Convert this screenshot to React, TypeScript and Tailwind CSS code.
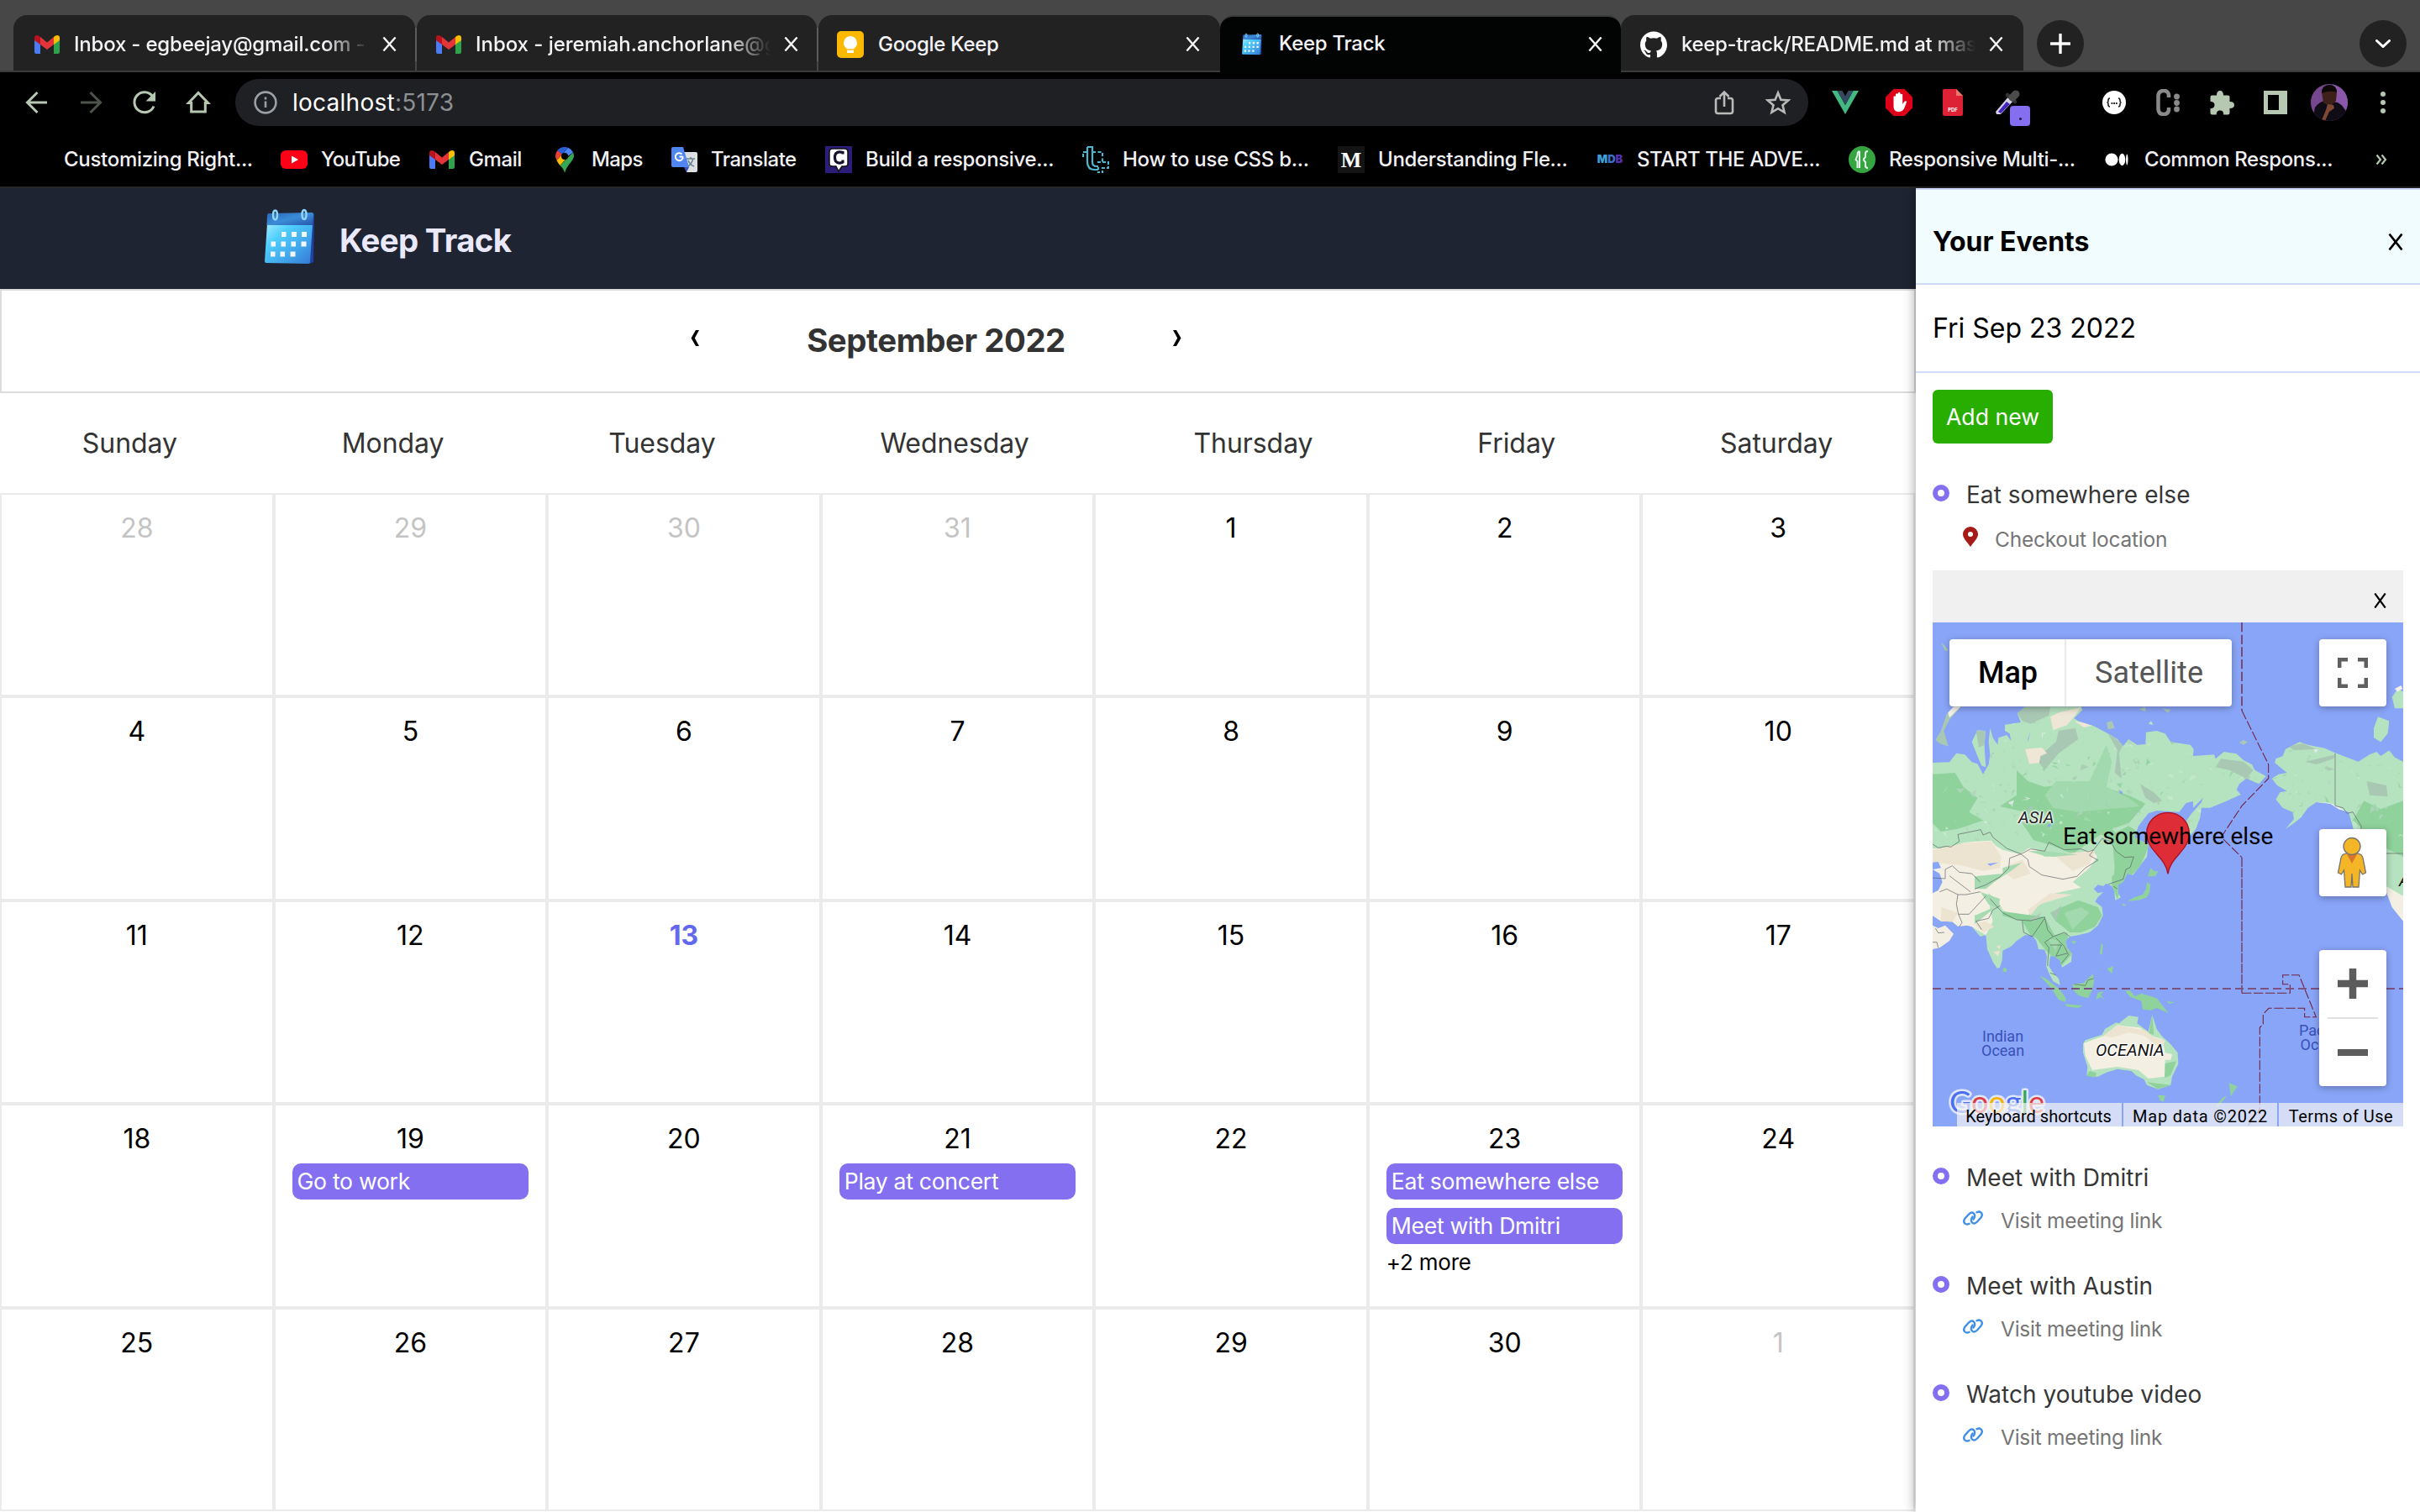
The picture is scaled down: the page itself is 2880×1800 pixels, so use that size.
import React from "react";
import { SiGithub } from "react-icons/si";

const CloseIcon = ({ className }: { className: string }) => (
  <svg viewBox="0 0 18 18" preserveAspectRatio="none" className={className} fill="none" stroke="currentColor" strokeWidth="2.5">
    <path d="M1.500 0.500 16.500 17.500M16.500 0.500 1.500 17.500" />
  </svg>
);

const GmailIcon = () => (
  <svg viewBox="0 0 30 22" className="h-[22px] w-[30px]">
    <path d="M0 3v17q0 2 2 2h5V9z" fill="#4b7bf5" />
    <path d="M30 3v17q0 2-2 2h-5V9z" fill="#2fa24c" />
    <path d="M7 2v9L0 6V3Q0 0 3 0q2 0 4 2z" fill="#b8131f" />
    <path d="M23 2v9l7-5V3q0-3-3-3-2 0-4 2z" fill="#fbbc04" />
    <path d="M7 2l8 6.500 8-6.500v9l-8 6-8-6z" fill="#e3343a" />
  </svg>
);

const CalendarLogo = ({ className }: { className: string }) => (
  <svg viewBox="0 0 60 68" className={className}>
    <defs>
      <linearGradient id="calPage" x1="0" y1="0" x2="1" y2="1">
        <stop offset="0" stopColor="#a6ecff" />
        <stop offset=".3" stopColor="#4fcffc" />
        <stop offset=".65" stopColor="#41a6ec" />
        <stop offset="1" stopColor="#3478d4" />
      </linearGradient>
      <linearGradient id="calTop" x1="0" y1="0" x2="1" y2="1">
        <stop offset="0" stopColor="#2a62b8" />
        <stop offset=".5" stopColor="#3b8cd6" />
        <stop offset="1" stopColor="#2756ac" />
      </linearGradient>
    </defs>
    <path d="M55 6l4 0-1 58-5 2z" fill="#1f42a0" />
    <path d="M3 18h54l-3 46q0 2-2 2L2 65q-2 0-2-2z" fill="url(#calPage)" />
    <path d="M4 6l53-1 1 2-1 13H2.500L3 8z" fill="url(#calTop)" />
    <ellipse cx="12.500" cy="8" rx="2.500" ry="5.500" fill="none" stroke="#8fd6fa" strokeWidth="2.400" />
    <ellipse cx="47" cy="7.500" rx="2.500" ry="5.500" fill="none" stroke="#8fd6fa" strokeWidth="2.400" />
    <g fill="#f3f6fb">
      <path d="M20 28h5.500v6H20zM32 28h6v6h-6zM44 28h6v6h-6z" />
      <path d="M7.500 39.500H13v6H7.500zM19.500 39.500H25v6h-5.500zM31.500 39.500h5.500v6h-5.500zM43.500 39.500h6v6h-6z" />
      <path d="M7 51.500h5.500v6H7zM18.500 51.500H24v6h-5.500zM30.500 51.500h6v6h-6z" />
    </g>
  </svg>
);

const KeepIcon = () => (
  <svg viewBox="0 0 32 32" className="size-8">
    <rect width="32" height="32" rx="5" fill="#fbb904" />
    <path d="M16 6a8 8 0 0 0-4.500 14.500V22h9v-1.500A8 8 0 0 0 16 6z" fill="#fff" />
    <path d="M12 22.500h8V26h-8z" fill="#fff" />
    <path d="M11 21.300h10v1.200H11z" fill="#fbb904" />
  </svg>
);

type TabProps = {
  icon: React.ReactNode;
  label: string;
  width: string;
  pad: string;
  tracking: string;
  active?: boolean;
  fade?: boolean;
};

const Tab = ({ icon, label, width, pad, tracking, active, fade }: TabProps) => (
  <div
    className={`flex items-center rounded-t-[16px] ${width} ${pad} ${
      active ? "border-t-2 border-[#3b3b3b] bg-[#020303] pb-1" : "bg-[#222222] pt-[3px]"
    }`}
  >
    <span className="flex shrink-0">{icon}</span>
    <span
      className={`min-w-0 flex-1 overflow-hidden whitespace-nowrap text-[24px] font-medium text-[#f3f3f6] ${tracking} ${
        active ? "ml-5" : "ml-[17px]"
      } ${fade ? "mask-r-from-85% mask-r-to-100%" : ""}`}
    >
      {label}
    </span>
    <CloseIcon className="ml-4 h-[17px] w-[17px] shrink-0 text-[#f4f4f4]" />
  </div>
);

const bookmarks: { icon: React.ReactNode; label: string; width: string; gap: string; tracking: string }[] = [
  { icon: <span className="w-8" />, label: "Customizing Right...", width: "w-[306px]", gap: "gap-4", tracking: "tracking-[-0.3px]" },
  {
    icon: (
      <svg viewBox="0 0 32 22" className="h-[22px] w-8">
        <rect width="32" height="22" rx="6" fill="#ff0016" />
        <path d="M13 6.500v9l8-4.500z" fill="#fff" />
      </svg>
    ),
    label: "YouTube", width: "w-[177px]", gap: "gap-4", tracking: "tracking-[-0.8px]",
  },
  { icon: <GmailIcon />, label: "Gmail", width: "w-[150px]", gap: "gap-[17px]", tracking: "tracking-[-0.4px]" },
  {
    icon: (
      <svg viewBox="0 0 22 31" className="h-[31px] w-[22px]">
        <path d="M11 0a11 11 0 0 0-8.500 4L7.500 9 15 .8A11 11 0 0 0 11 0z" fill="#2a5fd8" />
        <path d="M15 .8 8 9l4 4 9-6.500A11 11 0 0 0 15 .8z" fill="#4b84f3" />
        <path d="M2.500 4A11 11 0 0 0 1.500 16L8 9z" fill="#e94235" />
        <path d="M1.500 16q1.500 3 4 6L15 11.500 8 9z" fill="#fbbc04" />
        <path d="M21 6.500 5.500 22Q10 26 11 31q1-5 5-10Q22 14 22 11q0-2.500-1-4.500z" fill="#34a853" />
        <circle cx="11" cy="11" r="4" fill="#000" />
      </svg>
    ),
    label: "Maps", width: "w-[138px]", gap: "gap-[21px]", tracking: "tracking-[-0.6px]",
  },
  {
    icon: (
      <svg viewBox="0 0 31 30" className="h-[30px] w-[31px]">
        <path d="M14 6h15q2 0 2 2v20q0 2-2 2H18z" fill="#dde0e2" />
        <path d="M15 24h6l-3 6z" fill="#3b50c0" />
        <path d="M2 0h12l7 24H2q-2 0-2-2V2q0-2 2-2z" fill="#4f86f2" />
        <path d="M13.500 11.500H9.500M12.500 8.500a4.500 4.500 0 1 0 1.300 3" fill="none" stroke="#fff" strokeWidth="2" />
        <path d="M18 14h10M23 12v2M26 14q-2 6-6 9M20 16q2 5 7 7" fill="none" stroke="#6a8290" strokeWidth="1.600" />
      </svg>
    ),
    label: "Translate", width: "w-[183px]", gap: "gap-[16px]", tracking: "tracking-[-0.5px]",
  },
  {
    icon: (
      <svg viewBox="0 0 32 32" className="size-8">
        <rect width="32" height="32" fill="#2c1d78" />
        <path d="M9 3h14q4 0 4 4v14q0 3-4 3h-3l-4 6-3-6H9q-4 0-4-3V7q0-4 4-4z" fill="#fff" stroke="#111" strokeWidth="1.500" />
        <path d="M21 9.500V7.500q-6-2-8.500 1.500-2 4 0 9 3 3.500 8.500 1v-2.500" fill="none" stroke="#17122b" strokeWidth="3.200" />
      </svg>
    ),
    label: "Build a responsive...", width: "w-[306px]", gap: "gap-4", tracking: "tracking-[-0.35px]",
  },
  {
    icon: (
      <svg viewBox="0 0 32 32" className="size-8" fill="none" stroke="#4fb6cf" strokeWidth="2.200">
        <path d="M6 1h6v18q0 5 5 5h2" />
        <path d="M6 1v18q0 9 9 9h4" />
        <path d="M12 7h12v12h-6" strokeDasharray="4 2.500" />
        <path d="M1 13V7h4M24 19h7v7h-6" strokeDasharray="4 2" />
        <path d="M19 25v6h5v-6" strokeDasharray="3 2" />
      </svg>
    ),
    label: "How to use CSS b...", width: "w-[304px]", gap: "gap-4", tracking: "tracking-[-0.25px]",
  },
  {
    icon: (
      <span className="flex size-8 items-center justify-center bg-[#141414] font-['Liberation_Serif',serif] text-[26px] font-bold text-white">M</span>
    ),
    label: "Understanding Fle...", width: "w-[308px]", gap: "gap-4", tracking: "tracking-[-0.35px]",
  },
  {
    icon: (
      <span className="flex w-8 justify-center font-['Inter',sans-serif] text-[13px] font-black">
        <span className="text-[#3f9fd4]">M</span>
        <span className="text-[#3c6fc9]">D</span>
        <span className="text-[#5430b4]">B</span>
      </span>
    ),
    label: "START THE ADVE...", width: "w-[300px]", gap: "gap-4", tracking: "tracking-[-0.4px]",
  },
  {
    icon: (
      <svg viewBox="0 0 32 32" className="size-8">
        <circle cx="16" cy="16" r="16" fill="#35a541" />
        <path d="M13 6v20M13 6q-2.500 0-2.500 5l-2 5 2 2v8M17.500 16l2.500-3V9q0-3 3-3M17.500 16l2.500 3v4q0 3 3 3" fill="none" stroke="#eaf7eb" strokeWidth="2" />
      </svg>
    ),
    label: "Responsive Multi-...", width: "w-[303px]", gap: "gap-4", tracking: "tracking-[-0.35px]",
  },
  {
    icon: (
      <svg viewBox="0 0 32 32" className="size-8" fill="#fff">
        <circle cx="10" cy="16" r="7.600" />
        <ellipse cx="22.500" cy="16" rx="3.800" ry="7.200" />
        <ellipse cx="28.300" cy="16" rx="1.200" ry="6.500" />
      </svg>
    ),
    label: "Common Respons...", width: "w-[324px]", gap: "gap-[17px]", tracking: "tracking-[-0.4px]",
  },
];

const Browser = () => (
  <header className="h-[224px] w-full overflow-hidden border-b-2 border-[#262727] bg-black">
    <div className="flex h-[86px] items-end border-b-2 border-[#3b3b3b] bg-[#474747] pl-4">
      <div className="flex h-[66px]">
        <Tab icon={<GmailIcon />} label="Inbox - egbeejay@gmail.com -" width="w-[478px]" pad="pl-[25px] pr-[22px]" tracking="tracking-[-0.2px]" fade />
        <div className="mt-[15px] h-10 w-0.5 bg-[#5c5c5c]" />
        <Tab icon={<GmailIcon />} label="Inbox - jeremiah.anchorlane@gmail.com" width="w-[476px]" pad="pl-[23px] pr-[22px]" tracking="tracking-[-0.05px]" fade />
        <div className="mt-[15px] h-10 w-0.5 bg-[#5c5c5c]" />
        <Tab icon={<KeepIcon />} label="Google Keep" width="w-[478px]" pad="pl-[22px] pr-[24px]" tracking="tracking-[-0.3px]" />
        <div className="-mb-1 flex">
          <Tab icon={<CalendarLogo className="h-[27px] w-6" />} label="Keep Track" width="w-[477px]" pad="pl-[26px] pr-[22px]" tracking="tracking-[-0.3px]" active />
        </div>
        <Tab icon={<SiGithub className="size-8 text-white" />} label="keep-track/README.md at master" width="w-[479px]" pad="pl-[23px] pr-[24px]" tracking="tracking-[-0.35px]" fade />
      </div>
      <div className="mb-1 ml-4 flex size-14 items-center justify-center rounded-full bg-[#222]">
        <svg viewBox="0 0 24 24" className="size-6" stroke="#fff" strokeWidth="3.400" strokeLinecap="round">
          <path d="M12 1v22M1 12h22" />
        </svg>
      </div>
      <div className="mr-4 mb-1 ml-auto flex size-14 items-center justify-center rounded-full bg-[#222]">
        <svg viewBox="0 0 18 10" className="h-2.5 w-[18px]" fill="none" stroke="#fff" strokeWidth="3" strokeLinecap="round">
          <path d="M1.500 1.500 9 8.500l7.500-7" />
        </svg>
      </div>
    </div>

    <div className="flex h-[72px] items-center pl-7">
      <div className="flex w-[252px] items-center gap-8 text-[#b6c8b1]">
        <svg viewBox="0 0 32 32" className="size-8" fill="none" stroke="currentColor" strokeWidth="3">
          <path d="M28 16H5M16.500 4 4.500 16l12 12" />
        </svg>
        <svg viewBox="0 0 32 32" className="size-8" fill="none" stroke="#4c544b" strokeWidth="3">
          <path d="M4 16h23M15.500 4l12 12-12 12" />
        </svg>
        <svg viewBox="0 0 32 32" className="size-8" fill="none" stroke="currentColor" strokeWidth="3">
          <path d="M27 20.500A12 12 0 1 1 25.500 8.500" />
          <path d="M29 3v11.500H17.500z" fill="currentColor" stroke="none" />
        </svg>
        <svg viewBox="0 0 32 32" className="size-8" fill="none" stroke="currentColor" strokeWidth="3">
          <path d="M4.500 16.500 16 4.500l11.500 12h-3.200V27H7.700V16.500z" />
        </svg>
      </div>
      <div className="flex h-14 w-[1872px] items-center rounded-full bg-[#1f2023] pl-[22px]">
        <svg viewBox="0 0 28 28" className="size-7" fill="none" stroke="#9aa0a6" strokeWidth="2.600">
          <circle cx="14" cy="14" r="12.400" />
          <path d="M14 12.500V20M14 7.500v3" />
        </svg>
        <span className="ml-[18px] text-[28px] tracking-[0.25px] text-white">
          localhost<span className="text-[#8d8f93]">:5173</span>
        </span>
        <svg viewBox="0 0 24 30" className="mr-[37px] ml-auto h-[30px] w-6" fill="none" stroke="#b9bbb9" strokeWidth="2.600">
          <path d="M8 10H4.500Q2 10 2 12.500v13Q2 28 4.500 28h15q2.500 0 2.500-2.500v-13Q22 10 19.500 10H16M12 20V2.500M6.500 8 12 2.500 17.500 8" />
        </svg>
        <svg viewBox="0 0 30 30" className="mr-[21px] size-[30px]" fill="none" stroke="#b9bbb9" strokeWidth="2.600">
          <path d="M15 3.500l3.400 8.200 8.800.7-6.700 5.800 2.100 8.600-7.600-4.600-7.600 4.600 2.100-8.600-6.700-5.800 8.800-.7z" />
        </svg>
      </div>
      <div className="ml-7 flex flex-1 items-center">
        <svg viewBox="0 0 32 28" className="mr-8 h-7 w-8">
          <path d="M0 0h6.500L16 17 25.500 0H32L16 28z" fill="#42b883" />
          <path d="M6.500 0h6L16 6.500 19.500 0h6L16 17z" fill="#35495e" />
        </svg>
        <svg viewBox="0 0 32 32" className="mr-9 size-8">
          <path d="M9.500 0h13L32 9.500v13L22.500 32h-13L0 22.500v-13z" fill="#dd0018" />
          <path d="M9.500 15.500V9q1.500-1.500 2.500 0V6q1.500-1.700 2.700 0V4.500q1.500-1.500 2.800 0V6.500q1.500-1.500 2.700 0V18l2-3q2-1.500 3 0l-3 8q-2 4-6.500 4-6 0-6.200-6z" fill="#fff" />
        </svg>
        <svg viewBox="0 0 24 32" className="mr-[38px] h-8 w-6">
          <path d="M2 0h14l8 8v22q0 2-2 2H2q-2 0-2-2V2q0-2 2-2z" fill="#dd2235" />
          <path d="M16 0l8 8h-8z" fill="#e9776a" />
          <text x="12" y="27" textAnchor="middle" fontSize="5.800" fontWeight="700" fill="#fff" fontFamily="Inter, sans-serif">PDF</text>
        </svg>
        <div className="relative mr-[86px] size-8">
          <svg viewBox="0 0 32 32" className="size-8">
            <path d="M1 27 18 7l6 5L7 30H2z" fill="#d4d0e6" />
            <path d="M4 27 14 15l4 3L7 29z" fill="#4322c0" />
            <path d="M15 7l9 8" stroke="#333" strokeWidth="4.500" strokeLinecap="round" />
            <path d="M21 10l4-4" stroke="#4b4b4b" strokeWidth="9" strokeLinecap="round" />
          </svg>
          <span className="absolute top-[20px] left-[18px] flex size-6 items-center justify-center rounded-[4px] bg-[#856ff0]">
            <span className="mt-1.5 size-[3px] rounded-full bg-[#1c1538]" />
          </span>
        </div>
        <svg viewBox="0 0 28 28" className="mr-9 ml-[10px] size-7">
          <circle cx="14" cy="14" r="14" fill="#fff" />
          <path d="M9 9q-2 0-2 2.500Q7 14 5.500 14 7 14 7 16.500T9 19M19 9q2 0 2 2.500 0 2.500 1.500 2.500Q21 14 21 16.500T19 19" fill="none" stroke="#222" strokeWidth="1.600" />
          <path d="M10.500 15h1.800M13.200 15h1.800M15.900 15h1.800" stroke="#222" strokeWidth="2" />
        </svg>
        <svg viewBox="0 0 28 32" className="mr-9 h-8 w-7">
          <path d="M15 10V7q-1-5-6-5-6 0-6.500 6v16q.5 6 6.500 6 5 0 6-5v-3" fill="none" stroke="#8a8a8a" strokeWidth="4.500" />
          <g fill="#8a8a8a">
            <circle cx="24.500" cy="9" r="3.400" />
            <circle cx="24.500" cy="16.500" r="3.400" />
            <circle cx="24.500" cy="24" r="3.400" />
          </g>
        </svg>
        <svg viewBox="0 0 29 29" className="mr-[35px] size-[29px]">
          <path d="M2.500 5.500H8q0-5.500 4-5.500t4 5.500h5.500q2 0 2 2V13Q29 13 29 17t-5.500 4v5.500q0 2-2 2h-5.200q0-5-4.300-5t-4.300 5H2.500q-2 0-2-2v-5.200q5-.3 5-4.300t-5-4.300V7.500q0-2 2-2z" fill="#b6c8b1" />
        </svg>
        <svg viewBox="0 0 28 28" className="mr-7 size-7">
          <path d="M0 0h28v28H0zM5 5v18h13V5z" fill="#b6c8b1" fillRule="evenodd" />
        </svg>
        <svg viewBox="0 0 44 44" className="mr-[38px] size-11">
          <clipPath id="avatarClip">
            <circle cx="22" cy="22" r="22" />
          </clipPath>
          <g clipPath="url(#avatarClip)">
            <path d="M0 0h44v44H0z" fill="#75478f" />
            <path d="M26 0h18v30H26z" fill="#8a58a8" />
            <path d="M5 28q6-8 13-8l14 2q8 4 12 16v6H2z" fill="#100c16" />
            <path d="M13 10q0-8 9-8t9 8l-1 10-7 7-8-5z" fill="#3c2019" />
            <path d="M13 11q0-10 9-10t9 9q-9-3-18 1z" fill="#0b0707" />
            <path d="M20 24l7 1 1 4-6 4-5 11-4-1 5-12z" fill="#7d4734" />
          </g>
        </svg>
        <svg viewBox="0 0 8 28" className="h-7 w-2" fill="#b6c8b1">
          <circle cx="4" cy="4" r="3" />
          <circle cx="4" cy="14" r="3" />
          <circle cx="4" cy="24" r="3" />
        </svg>
      </div>
    </div>

    <div className="flex h-16 items-center pl-[28px]">
      {bookmarks.map((b) => (
        <div key={b.label} className={`flex h-9 shrink-0 items-center ${b.width} ${b.gap}`}>
          <span className="flex justify-center">{b.icon}</span>
          <span className={`text-[24px] font-medium whitespace-nowrap text-[#f1f1f4] ${b.tracking}`}>{b.label}</span>
        </div>
      ))}
      <svg viewBox="0 0 14 14" className="size-3.5" fill="none" stroke="#b6c8b1" strokeWidth="2.200">
        <path d="M1.500 1.500 6 7l-4.500 5.500M7.500 1.500 12 7l-4.500 5.500" />
      </svg>
    </div>
  </header>
);

type Day = { n: number; out?: boolean; today?: boolean; events?: string[]; more?: string };

const days: Day[] = [
  ...[28, 29, 30, 31].map((n) => ({ n, out: true })),
  ...Array.from({ length: 30 }, (_, i): Day => {
    const n = i + 1;
    if (n === 13) return { n, today: true };
    if (n === 19) return { n, events: ["Go to work"] };
    if (n === 21) return { n, events: ["Play at concert"] };
    if (n === 23) return { n, events: ["Eat somewhere else", "Meet with Dmitri"], more: "+2 more" };
    return { n };
  }),
  { n: 1, out: true },
];

const DayCell = ({ day }: { day: Day }) => (
  <div className="flex flex-col border-2 border-[#ebebeb] px-5 pt-[18px]">
    <span
      className={`text-center text-[32px] leading-[44px] ${
        day.out ? "text-[#c4c4c4]" : day.today ? "font-bold text-[#6468ee]" : "text-black"
      }`}
    >
      {day.n}
    </span>
    <div className="mt-[7px] flex flex-col gap-2.5">
      {day.events?.map((e) => (
        <span key={e} className="h-[43px] rounded-[10px] bg-[#846ff0] pl-1.5 text-[26.67px] leading-[43px] tracking-[-0.33px] whitespace-nowrap text-white">
          {e}
        </span>
      ))}
    </div>
    {day.more && <span className="mt-1 text-[26px] leading-9 tracking-[-0.2px] text-black">{day.more}</span>}
  </div>
);

const Chevron = ({ flip }: { flip?: boolean }) => (
  <svg viewBox="0 0 10 19" className={`-mt-[7px] h-[19px] w-2.5 ${flip ? "-scale-x-100" : ""}`}>
    <path d="M6 0h4L4.800 9.500 10 19H6L.5 9.500z" fill="#000" />
  </svg>
);

const CalendarPage = () => (
  <main className="flex w-[2280px] flex-col bg-white">
    <div className="flex h-[120px] items-center gap-[29px] bg-[#1f2432] pl-[315px]">
      <CalendarLogo className="-mt-1 h-[68px] w-[60px]" />
      <span className="pt-1.5 text-[38.4px] font-bold tracking-[-0.65px] text-[#eae8fb]">Keep Track</span>
    </div>
    <div className="flex h-[124px] items-center justify-center gap-[128px] border-2 border-[#dcdcdc] pr-[52px]">
      <Chevron />
      <h1 className="text-[38.4px] font-bold tracking-[-0.45px] text-[#333]">September 2022</h1>
      <Chevron flip />
    </div>
    <div className="flex h-[119px] w-[2279px] items-center justify-around text-[32px] tracking-[-0.05px] text-[#333]">
      {["Sunday", "Monday", "Tuesday", "Wednesday", "Thursday", "Friday", "Saturday"].map((d) => (
        <span key={d}>{d}</span>
      ))}
    </div>
    <div className="grid h-[1212px] w-[2279px] grid-cols-7 grid-rows-5">
      {days.map((d, i) => (
        <DayCell key={i} day={d} />
      ))}
    </div>
  </main>
);

const asia =
  "M0 264L60 262 85 230 115 235 140 262 160 268 180 305 200 270 205 235 200 190 205 140 215 175 232 200 235 175 265 165 280 185 275 160 258 150 258 128 315 120 302 88 330 66 370 64 530 64 535 75 505 105 520 115 580 135 635 165 660 180 680 205 700 180 730 200 760 198 762 155 800 150 830 160 850 190 920 200 932 215 930 240 1005 235 1010 250 1040 225 1085 232 1110 255 1140 270 1150 290 1190 312 1165 340 1120 320 1095 340 1085 360 1100 378 1040 405 990 425 960 425 955 460 940 500 920 525 905 530 900 480 925 445 960 405 965 390 930 425 930 402 905 408 880 440 800 435 770 445 735 490 720 530 770 555 765 600 735 640 715 665 695 660 680 690 662 700 662 730 672 745 652 755 648 720 640 705 620 695 610 705 590 700 575 715 590 730 610 725 590 745 580 760 605 780 608 810 590 845 560 870 520 880 490 885 475 900 480 925 497 945 495 975 462 995 455 970 435 955 420 955 415 990 430 1015 450 1035 455 1058 430 1045 415 1015 405 990 408 955 400 932 378 930 370 900 355 880 330 880 300 900 280 920 250 935 248 970 240 995 230 998 215 975 195 930 190 880 170 885 140 850 125 845 90 848 70 832 30 830 0 810z";

/* Small irregular patches that break up the terrain shading. */
const terrainTones = ["#a3d9ae", "#c6ead0", "#8fd29b", "#b2d6bd", "#a9c8b4", "#e9eef0"];
const terrain = (() => {
  let s = 77;
  const rnd = () => {
    s = (s * 1103515245 + 12345) % 2147483648;
    return s / 2147483648;
  };
  return Array.from({ length: 420 }, (_, i) => {
    const x = rnd() * 1680;
    const y = 80 + rnd() * 470;
    const big = 5 + rnd() * 15;
    const pt = () => `${(x + (rnd() - 0.5) * big * 2).toFixed(1)},${(y + (rnd() - 0.5) * big * 1.8).toFixed(1)}`;
    return { points: `${pt()} ${pt()} ${pt()} ${pt()}`, fill: i % 19 === 0 ? terrainTones[5] : terrainTones[i % 5] };
  });
})();

const alaska =
  "M1211 320L1235 305 1265 300 1222 265 1225 250 1250 240 1260 215 1310 190 1340 200 1400 212 1435 228 1480 245 1520 260 1560 235 1585 225 1600 240 1630 220 1650 245 1680 260V800L1660 740 1610 700 1560 620 1520 560 1485 440 1450 430 1420 410 1370 405 1340 425 1315 460 1290 480 1260 500 1290 465 1285 440 1250 425 1225 395 1240 370 1265 365 1230 345z";

const MapDrawing = () => (
  <svg viewBox="0 -237 1680 1800" className="h-[600px] w-[560px]">
    <defs>
      <clipPath id="land">
        <path d={asia} />
        <path d={alaska} />
      </clipPath>
    </defs>
    <path d="M0-237h1680v1800H0z" fill="#89a5f8" />
    <g fill="#b5e2bf">
      <path d={asia} />
      <path d={alaska} />
      <path d="M140 190L160 148 188 150 185 210 190 280 175 275 160 240zM1575 140L1590 100 1630 115 1625 160 1600 190 1575 175zM1640 30L1660 0 1680 10V70L1650 70z" />
    </g>
    <g fill="#a9c8b4">
      <path d="M10 182L30 150 50 90 80 65 102 64 60 110 40 150 56 206 25 195zM302 88L330 64 420 64 415 95 350 125 320 115zM155 150L188 150 185 200 165 210zM622 120L640 115 650 140 625 145zM1095 192L1110 183 1125 190 1110 200zM820 70L850 75 840 86zM737 72L760 66 760 82zM30-165L42-155 56-137 45-135z" />
    </g>
    <path d="M55 85L75 64h25L60 103zM1650 0L1672-12 1678 0 1660 10z" fill="#f4f1ea" />
    <path d="M770 125l10-10 8 14z" fill="#b5e2bf" />
    <g clipPath="url(#land)">
      <path d="M0 305L80 300 110 350 160 390 130 440 180 470 90 500 30 510 0 480zM300 290L340 330 400 350 440 345 480 370 560 350 640 360 700 380 760 410 700 480 640 500 700 560 600 520 500 590 430 560 360 540 320 480 330 440 240 420 300 380zM1540 400L1600 430 1680 400V600L1600 560 1500 470zM640 520L700 490 780 540 740 640 690 680 640 740 650 640z" fill="#8fd29b" />
      <path d="M400 380L440 330 560 330 620 200 640 260 620 350 700 390 740 420 620 430 520 440 430 425z" fill="#a3d9ae" />
      {terrain.map((t, i) => (
        <polygon key={i} points={t.points} fill={t.fill} opacity=".8" />
      ))}
      <path d="M370 250L440 190 450 150 510 140 520 180 450 230 400 290zM620 150L680 200 665 230 675 320 650 300 660 220zM740 340L790 370 820 400 790 408 760 390zM1030 250L1110 260 1145 290 1120 320 1060 290 1010 280zM1270 205L1320 195 1370 215 1290 220zM1330 260L1440 235 1430 250 1370 270zM1550 330L1620 345 1625 385 1560 380z" fill="#a9c8b4" />
      <path d="M330 215L390 210 408 230 385 240 380 265 345 268zM420 100L450 85 530 66 505 100 480 130 430 148zM505 115L580 130 540 138z" fill="#eee6d6" />
      <path d="M0 570L60 570 110 550 150 545 210 542 225 560 250 575 310 590 345 568 370 575 400 600 500 592 570 575 588 600 560 640 500 690 530 710 440 730 420 750 350 790 340 820 290 815 250 790 235 760 200 730 205 790 215 830 190 880 140 850 60 850 0 830z" fill="#f4efe3" />
      <path d="M0 575L110 552 210 545 245 600 240 640 180 650 100 630 0 620zM250 640L320 610 350 660 290 680 260 660zM430 590L580 580 560 625 500 650zM30 780L90 800 60 850 30 830zM150 840L190 830 220 850 180 870zM340 790L420 730 500 735 380 770 350 810z" fill="#ece3d0" />
      <path d="M150 670L250 660 250 640 320 620 280 650 220 690 190 715 150 715zM170 725L240 750 235 785 200 770zM150 810L220 780 200 800 150 840zM340 580L400 580 520 592 430 600 400 597z" fill="#a6dab0" />
      <path d="M440 790L520 755 590 780 605 810 580 850 530 870 490 870 440 830 420 800zM250 795L400 815 435 880 480 870 495 950 460 990 420 950 400 930 370 890 350 880 320 830 250 810zM640 670L700 630 680 690 660 750 640 710z" fill="#8fd29b" />
      <path d="M470 800L530 780 560 800 500 860zM410 890L450 900 440 940z" fill="#a3d9ae" />
      <path d="M425 800L460 775 440 830zM350 820L390 800 360 835z" fill="#a9c8b4" />
      <path d="M215 940L240 935 235 955zM228 920L243 915 238 930z" fill="#ece3d0" />
      <path d="M1370 405L1420 408 1440 418 1480 440 1440 428z" fill="#f4f4f2" />
    </g>
    <path d="M0 620L20 618 30 640 0 645 25 660 35 690 20 720 0 730zM195 625L235 620 205 632zM410 490L430 470 418 495zM340 180L350 150 340 190zM662 360L678 368 675 380z" fill="#89a5f8" />
    <path d="M0 845L20 855 45 845 75 875 60 900 25 925 0 930zM1610 700L1680 740V830L1640 780z" fill="#f4efe3" />
    <g fill="#8fd29b">
      <path d="M778 640L790 650 805 652 795 670 768 670zM765 690L778 700 775 725 765 745 735 755 695 758 720 745 750 735 762 715zM680 765l12 10-15 0zM602 908L608 915 605 950 597 945zM495 900L515 902 503 912zM253 995L265 1000 264 1012 250 1010zM622 1000L645 990 640 1018z" />
      <path d="M382 1025L405 1035 455 1075 475 1105 475 1120 450 1110 420 1065zM500 1055L540 1050 572 1018 577 1040 570 1075 555 1105 520 1095 502 1075zM583 1110L590 1085 612 1080 600 1092 614 1112 600 1100zM470 1125L535 1132 520 1140 480 1135z" />
      <path d="M687 1078L705 1078 722 1098 745 1088 800 1105 820 1130 842 1158 800 1140 780 1148 750 1145 745 1115 705 1100zM835 1115L862 1120 845 1125zM1058 1408L1088 1420 1065 1455zM1050 1455L1020 1490 1005 1500 1035 1460zM805 1452L830 1452 825 1475 812 1470z" />
    </g>
    <path d="M537 1268L545 1255 605 1235 615 1215 655 1192 665 1195 700 1167 735 1172 730 1195 770 1225 784 1165 800 1215 818 1240 850 1270 875 1300 877 1340 855 1385 850 1415 805 1430 765 1415 755 1395 725 1380 710 1365 660 1358 620 1370 590 1385 550 1382 553 1350 537 1300z" fill="#b5e2bf" />
    <path d="M784 1165L790 1235 772 1230zM820 1340L870 1330 850 1380 830 1390zM550 1382L560 1365 585 1372 580 1388zM765 1405L850 1415 805 1430z" fill="#8fd29b" />
    <path d="M540 1265L610 1240 660 1200 690 1205 740 1210 780 1240 820 1250 830 1300 855 1305 850 1325 830 1325 828 1385 770 1392 735 1362 660 1350 620 1355 570 1362 545 1310z" fill="#f4efe3" />
    <path d="M610 1240L660 1200 700 1210 760 1220 790 1245 700 1228 640 1245zM750 1235L830 1255 820 1290z" fill="#ece3d0" />
    <g fill="none" stroke="#5b5f63" strokeWidth="2">
      <path d="M0 555L20 568 50 562 65 565 95 545 90 520 172 503 180 522 205 512 215 530 265 570 315 590 350 572 400 580 415 548 470 575 530 572 555 582 575 575 605 535 635 545 655 580 685 602 718 600 705 638 690 645 680 680 628 698" />
      <path d="M315 590L340 610 345 635 390 665 465 680 515 670 545 640 590 612 560 595 575 575M315 590L275 605 272 640 240 672 190 700 150 715M0 675L45 678 45 645 70 632 95 655 140 660 170 690M60 668L135 725M25 725L50 715 90 735 120 735 170 725M90 735L85 770 92 805 105 835 95 850M92 805L130 805 190 740M240 775L215 790 200 820 155 830 175 860M205 750L250 800 300 825 350 828 400 815 410 860 430 885 470 870 490 885M320 830L325 870 355 885 400 820M430 885L400 905 415 925 410 990M440 890L470 920 485 950 460 980M420 915L460 915 440 955 480 945M645 705L660 715" />
      <path d="M505 1055L545 1060 555 1040 575 1035M420 1015L440 1022M10 855L20 872 42 870M0 905L15 905 20 925" />
    </g>
    <path d="M1437 230V418" stroke="#8ea596" strokeWidth="4" />
    <path d="M1437 418L1465 425 1480 445 1500 440 1530 490V540M1617 588H1680" fill="none" stroke="#6e757a" strokeWidth="2.500" />
    <g fill="none" stroke="#71223d" strokeWidth="3.200">
      <path strokeDasharray="34 10" d="M1104-237V78" stroke="#7a4a76" strokeWidth="6" />
      <path strokeDasharray="34 8" d="M1104 78L1199 270V320L1104 418 1030 530 1104 602" />
      <path d="M1104 602V1087" stroke="#7a4a76" strokeWidth="5" strokeDasharray="34 4" />
      <path strokeDasharray="34 8" d="M1104 1087H1276V1055H1250V1022H1308L1369 1172H1328V1141H1200L1180 1162V1198L1168 1210V1500L1124 1563" />
    </g>
    <path strokeDasharray="30 15" d="M0 1071h1680" stroke="#7a5280" strokeWidth="6" />
    <path d="M840 661c-8-62-76-82-76-145a76 74 0 0 1 152 0c0 63-68 83-76 145z" fill="#de2d36" stroke="#ab1220" strokeWidth="4" />
  </svg>
);

const mapPanel = "rounded-[4px] bg-white shadow-[0_2px_8px_rgba(0,0,0,0.3)]";
const halo = "[text-shadow:0_0_3px_#fff,0_0_3px_#fff,0_0_3px_#fff,0_0_3px_#fff]";

const GoogleMap = () => (
  <div className="relative h-[600px] w-[560px] overflow-hidden font-['Roboto',sans-serif]">
    <MapDrawing />
    <span className={`absolute top-[220px] left-[102px] text-[20px] leading-6 text-[#222] italic ${halo}`}>ASIA</span>
    <span className={`absolute top-[497px] left-[194px] text-[20px] leading-6 text-[#111] italic ${halo}`}>OCEANIA</span>
    <span className="absolute top-[292px] left-[555px] text-[20px] text-[#111] italic">A</span>
    <span className="absolute top-[484px] left-[58px] text-center text-[18px] leading-[17px] text-[#3a50b8]">Indian<br />Ocean</span>
    <span className="absolute top-[477px] left-[436px] text-center text-[18px] leading-[17px] text-[#3a50b8]">Pacific<br />Ocean</span>
    <span className="absolute top-[239px] left-[155px] text-[28px] leading-8 whitespace-nowrap text-black">Eat somewhere else</span>

    <div className={`absolute top-5 left-5 flex h-20 w-[336px] items-center text-[36px] ${mapPanel}`}>
      <span className="flex h-full w-[139px] items-center justify-center border-r-2 border-[#e9e9e9] pl-0.5 font-medium text-black">Map</span>
      <span className="flex-1 text-center text-[#565656]">Satellite</span>
    </div>
    <div className={`absolute top-5 right-5 flex size-20 items-center justify-center ${mapPanel}`}>
      <svg viewBox="0 0 36 36" className="size-9" fill="none" stroke="#5f5f5f" strokeWidth="4.500">
        <path d="M2.200 12V2.200H12M24 2.200h9.800V12M33.800 24v9.800H24M12 33.800H2.200V24" />
      </svg>
    </div>
    <div className={`absolute top-[246px] right-5 flex size-20 items-center justify-center pr-0.5 ${mapPanel}`}>
      <svg viewBox="0 0 36 62" className="h-[62px] w-9" stroke="#75736e" strokeWidth="1.300">
        <path d="M8 21q10-4 20 0 3 2 3.500 7l3 15-4 2-3-5-1.500 20h-7l-1-16-1 16h-7L8.500 40l-3 5-4-2 3-15q.5-5 3.500-7z" fill="#f4b626" />
        <path d="M12 21h12l-6 11z" fill="#d9742c" stroke="none" />
        <circle cx="18" cy="11.500" r="10" fill="#f4b626" />
      </svg>
    </div>
    <div className={`absolute top-[390px] right-5 flex h-[162px] w-20 flex-col items-center ${mapPanel}`}>
      <div className="flex h-20 items-center">
        <svg viewBox="0 0 36 36" className="size-9" stroke="#5c5c5c" strokeWidth="8.500">
          <path d="M18 0v36M0 18h36" />
        </svg>
      </div>
      <div className="h-0.5 w-[60px] bg-[#e1e1e1]" />
      <div className="mt-9 h-2 w-9 bg-[#5c5c5c]" />
    </div>

    <svg viewBox="0 0 130 44" className="absolute top-[551px] left-4 h-11 w-[130px]">
      <text x="4" y="33" textLength="113" fontFamily="Lato, sans-serif" fontSize="36" stroke="#dfe6fb" strokeWidth="5" strokeLinejoin="round" paintOrder="stroke">
        <tspan fill="#4b6ff0">G</tspan>
        <tspan fill="#dd3c3c">o</tspan>
        <tspan fill="#f4b400">o</tspan>
        <tspan fill="#4b6ff0">g</tspan>
        <tspan fill="#34a853">l</tspan>
        <tspan fill="#dd3c3c">e</tspan>
      </text>
    </svg>
    <div className="absolute right-0 bottom-0 flex h-7 gap-0.5 text-[20px] leading-8 whitespace-nowrap text-black">
      <span className="w-[196px] bg-[#f5f5f5]/70 pr-0.5 text-center">Keyboard shortcuts</span>
      <span className="w-[183px] bg-[#f5f5f5]/70 text-center tracking-[0.8px]">Map data ©2022</span>
      <span className="w-[148px] bg-[#f5f5f5]/70 text-center tracking-[0.5px]">Terms of Use</span>
    </div>
  </div>
);

const EventTitle = ({ children }: { children: React.ReactNode }) => (
  <div className="flex h-10 items-center">
    <span className="mr-[20px] -mt-1 size-5 shrink-0 rounded-full border-[6.5px] border-[#846ff0] bg-white" />
    <span className="text-[28px] tracking-[0.04px] whitespace-nowrap text-[#363636]">{children}</span>
  </div>
);

const LinkIcon = () => (
  <svg viewBox="0 0 24 18" className="h-[18px] w-6" fill="none" stroke="#3f8fe8" strokeWidth="2.400" strokeLinecap="round">
    <path d="M7.500 15.800Q4.500 17.500 2.400 15.500 0 13 2.500 9.500L7 4.500Q10.500 1 13 3.500 15.500 6.500 12.500 10.500" />
    <path d="M16.500 2.200Q19.500.5 21.600 2.500 24 5 21.500 8.500L17 13.500Q13.500 17 11 14.500 8.500 11.500 11.500 7.500" />
  </svg>
);

const MeetingEvent = ({ title }: { title: string }) => (
  <div className="h-[129px]">
    <EventTitle>{title}</EventTitle>
    <div className="mt-[11px] flex h-10 items-center pl-9">
      <span className="-mt-1.5"><LinkIcon /></span>
      <span className="ml-[21px] text-[24.500px] tracking-[-0.25px] text-[#757575]">Visit meeting link</span>
    </div>
  </div>
);

const Sidebar = () => (
  <aside className="z-10 flex w-[600px] flex-col bg-white shadow-[0_0_14px_rgba(0,0,0,0.4)]">
    <div className="flex h-[115px] items-center justify-between border-y-2 border-[#cfdafb] bg-[#f1fcff] pr-5 pl-5">
      <h2 className="pt-3 text-[32px] font-bold text-black">Your Events</h2>
      <CloseIcon className="mt-3 h-5 w-[18px] text-black" />
    </div>
    <div className="flex h-[105px] items-center border-b-2 border-[#cfdafb] pl-5 text-[32px] text-black">Fri Sep 23 2022</div>
    <div className="px-5 pt-5">
      <button className="block h-16 w-[143px] rounded-[6px] bg-[#27ae00] text-[26.67px] text-white">Add new</button>
      <div className="mt-[41px]">
        <EventTitle>Eat somewhere else</EventTitle>
      </div>
      <div className="mt-[13px] flex h-10 items-center pl-9">
        <svg viewBox="0 0 18 24" className="-mt-1.5 h-6 w-[18px]">
          <path d="M9 0a9 9 0 0 1 9 9c0 5-6 10-9 15C6 19 0 14 0 9a9 9 0 0 1 9-9zm0 6a3 3 0 1 0 0 6 3 3 0 0 0 0-6z" fill="#a51b17" fillRule="evenodd" />
        </svg>
        <span className="ml-5 text-[24.500px] tracking-[-0.25px] text-[#757575]">Checkout location</span>
      </div>
      <div className="mt-[17px] flex h-[62px] items-center justify-end bg-[#f0f0f0] pt-2.5 pr-5">
        <CloseIcon className="h-[18px] w-[15px] text-black" />
      </div>
      <GoogleMap />
      <div className="mt-[41px]">
        <MeetingEvent title="Meet with Dmitri" />
        <MeetingEvent title="Meet with Austin" />
        <MeetingEvent title="Watch youtube video" />
      </div>
    </div>
  </aside>
);

export default function App() {
  return (
    <div className="h-[1800px] w-[2880px] overflow-hidden bg-white font-['Inter',sans-serif]">
      <Browser />
      <div className="flex h-[1576px]">
        <CalendarPage />
        <Sidebar />
      </div>
    </div>
  );
}
